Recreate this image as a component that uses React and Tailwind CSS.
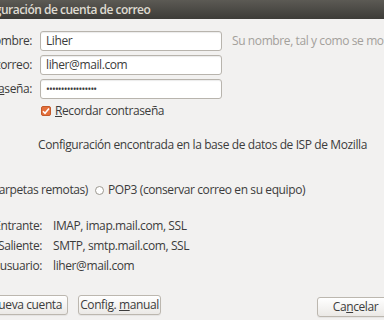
import React from 'react';

const font = { fontFamily: '"Open Sans", "Noto Sans", sans-serif' };

function Field({ label, value, hint }) {
  return (
    <div className="flex items-center h-[20px]">
      <div className="w-[32px] shrink-0 flex justify-end">
        <span className="whitespace-nowrap text-[#3c3c3c]">{label}</span>
      </div>
      <div className="ml-[8px] w-[182px] shrink-0 h-[20px] bg-white border border-[#b8b4ad] rounded-[3px] shadow-[inset_0_1px_1px_rgba(0,0,0,0.08)] flex items-center px-[5px] text-[#3c3c3c]">
        {value}
      </div>
      {hint && (
        <span className="ml-[10px] whitespace-nowrap text-[#a3a09b]">{hint}</span>
      )}
    </div>
  );
}

function ServerRow({ label, value }) {
  return (
    <div className="flex items-center h-[20px]">
      <div className="w-[42px] shrink-0 flex justify-end">
        <span className="whitespace-nowrap text-[#3c3c3c]">{label}</span>
      </div>
      <span className="ml-[11px] whitespace-nowrap text-[#3c3c3c]">{value}</span>
    </div>
  );
}

const btn =
  'whitespace-nowrap h-[20px] rounded-[3px] border border-[#bcb7af] bg-gradient-to-b from-white to-[#ebe9e6] text-[#3c3c3c] shadow-[0_1px_1px_rgba(0,0,0,0.06)]';

export default function App() {
  return (
    <div
      className="w-[384px] h-[320px] overflow-hidden bg-[#f2f1f0] text-[12px] tracking-[-0.4px] leading-none flex flex-col"
      style={font}
    >
      <div className="h-[19px] shrink-0 bg-gradient-to-b from-[#5c5a54] to-[#3d3c38] flex items-center">
        <span className="-ml-[33px] whitespace-nowrap font-semibold text-[12px] tracking-[-0.5px] text-[#dfdbd2]">
          Configuración de cuenta de correo
        </span>
      </div>

      <div className="mt-[12px] flex flex-col gap-[4px]">
        <Field label="Nombre:" value="Liher" hint="Su nombre, tal y como se mostrará a los demás" />
        <Field label="Dirección de correo:" value="liher@mail.com" />
        <Field
          label={<>Contr<span className="underline">a</span>seña:</>}
          value={<span className="tracking-[-0.8px] text-[10px]">•••••••••••••••••</span>}
        />
      </div>

      <div className="mt-[4px] h-[16px] flex items-center">
        <div className="ml-[41px] w-[10px] h-[10px] rounded-[2px] bg-[#e46f3b] border border-[#c35a2b] flex items-center justify-center">
          <svg width="8" height="8" viewBox="0 0 8 8">
            <path d="M1 4.2 L3 6.2 L7 1.5" stroke="white" strokeWidth="1.6" fill="none" />
          </svg>
        </div>
        <span className="ml-[4px] whitespace-nowrap text-[#3c3c3c]">
          <span className="underline">R</span>ecordar contraseña
        </span>
      </div>

      <div className="mt-[20px] ml-[38px] whitespace-nowrap text-[#3c3c3c]">
        Configuración encontrada en la base de datos de ISP de Mozilla
      </div>

      <div className="mt-[31px] h-[16px] flex items-center">
        <div className="w-[88px] shrink-0 flex justify-end">
          <span className="whitespace-nowrap text-[#3c3c3c]">IMAP (carpetas remotas)</span>
        </div>
        <div className="ml-[7px] w-[9px] h-[9px] rounded-full border border-[#9c9890] bg-white" />
        <span className="ml-[4px] whitespace-nowrap text-[#3c3c3c]">
          POP3 (conservar correo en su equipo)
        </span>
      </div>

      <div className="mt-[18px] flex flex-col">
        <ServerRow label="Entrante:" value="IMAP, imap.mail.com, SSL" />
        <ServerRow label="Saliente:" value="SMTP, smtp.mail.com, SSL" />
        <ServerRow label="Nombre de usuario:" value="liher@mail.com" />
      </div>

      <div className="mt-[19px] flex items-start">
        <div className="w-[68px] shrink-0 flex justify-end">
          <button className={`${btn} px-[5px]`}>Obtener una nueva cuenta</button>
        </div>
        <button className={`${btn} ml-[10px] w-[83px]`}>
          Config. <span className="underline">m</span>anual
        </button>
        <button className={`${btn} ml-auto -mr-[10px] mt-[2px] w-[77px] h-[19px]`}>
          Ca<span className="underline">n</span>celar
        </button>
      </div>
    </div>
  );
}
